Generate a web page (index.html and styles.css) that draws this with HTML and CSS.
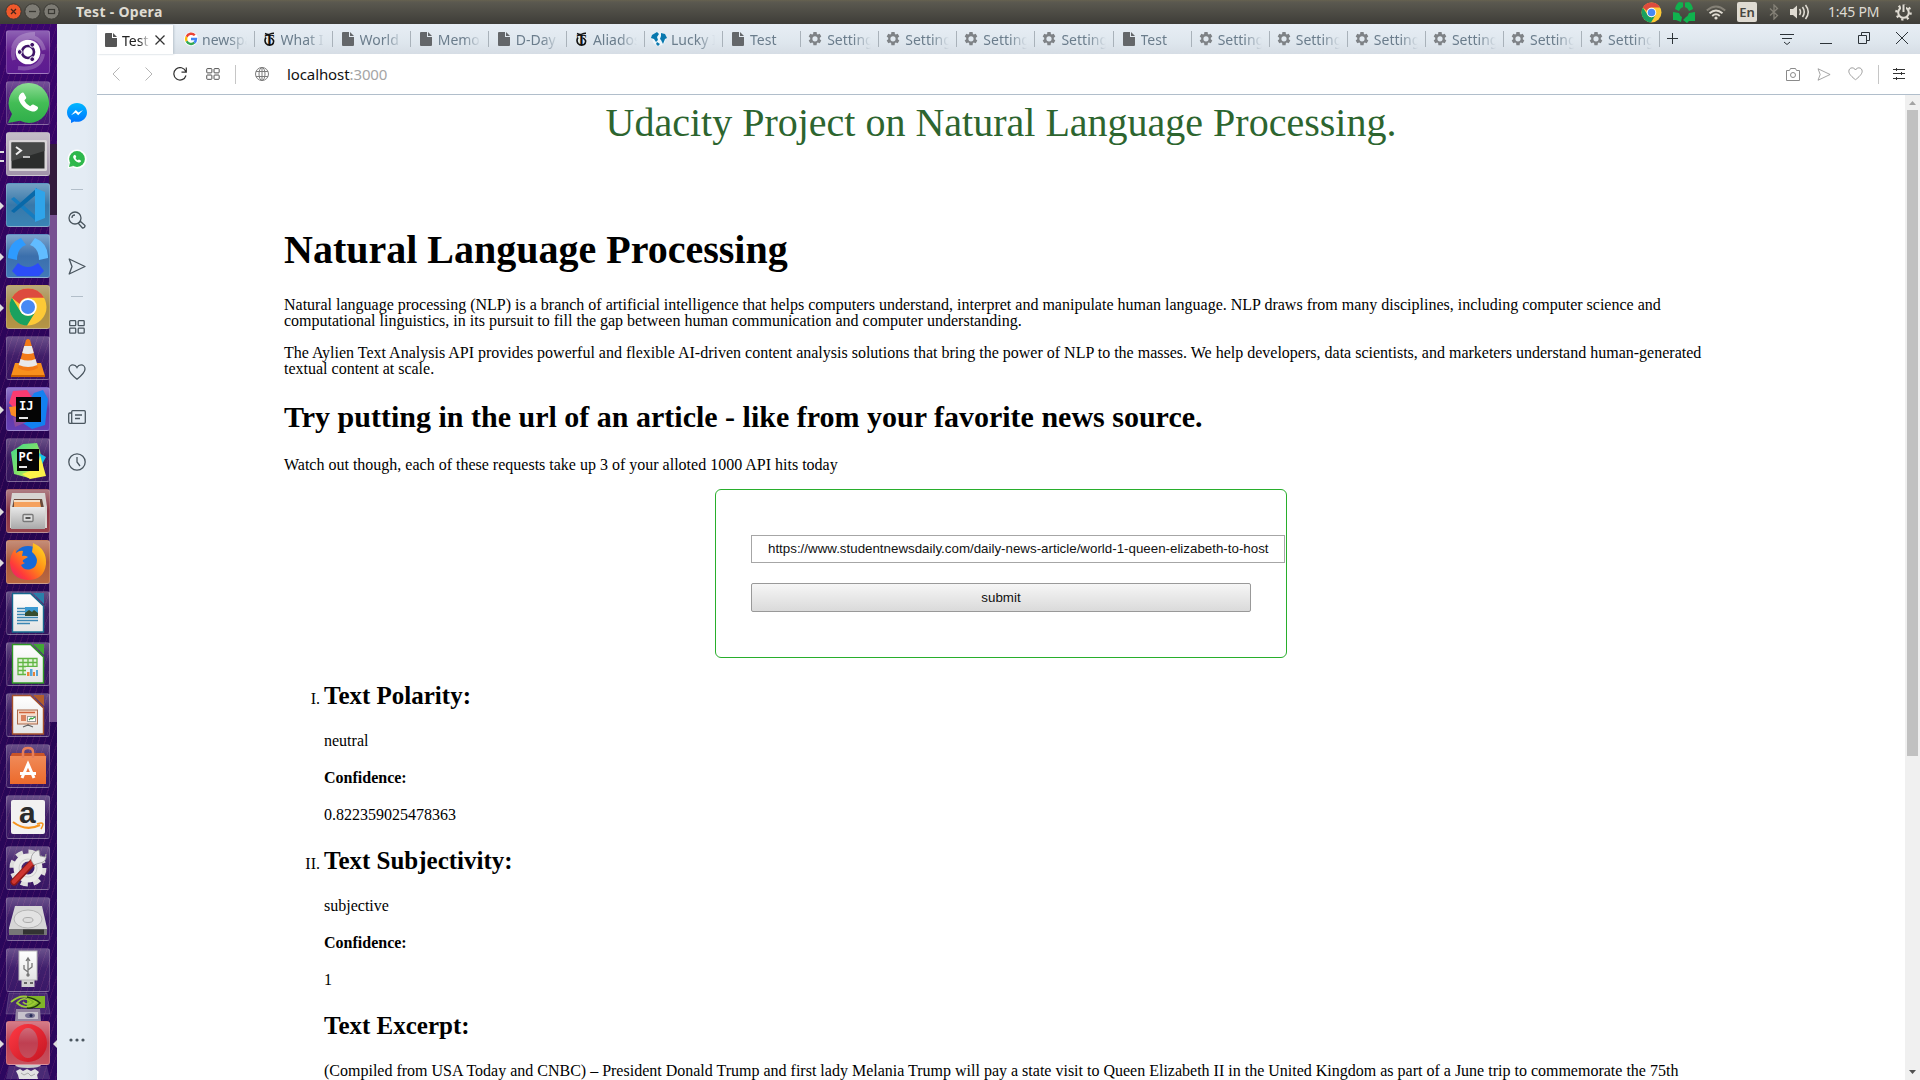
FILE: index.html
```html
<!DOCTYPE html>
<html lang="en">
<head>
<meta charset="utf-8">
<title>Test</title>
<link rel="stylesheet" href="styles.css">
</head>
<body>
<svg class="defs" width="0" height="0">
  <defs>
    <linearGradient id="gBubble" x1="0" y1="0" x2="0" y2="1"><stop offset="0" stop-color="#8fdc96"/><stop offset=".5" stop-color="#43bd55"/><stop offset="1" stop-color="#2fae4a"/></linearGradient>
    <linearGradient id="gMess" x1="0" y1="0" x2="0" y2="1"><stop offset="0" stop-color="#00b8ff"/><stop offset="1" stop-color="#0072ff"/></linearGradient>
    <linearGradient id="gPaper" x1="0" y1="0" x2="0" y2="1"><stop offset="0" stop-color="#fff"/><stop offset="1" stop-color="#e4e4e4"/></linearGradient>
    <linearGradient id="gMetal" x1="0" y1="0" x2="0" y2="1"><stop offset="0" stop-color="#e8e8e8"/><stop offset="1" stop-color="#a9a9a9"/></linearGradient>
    <linearGradient id="gBag" x1="0" y1="0" x2="0" y2="1"><stop offset="0" stop-color="#f08a58"/><stop offset="1" stop-color="#ec6a2c"/></linearGradient>
    <linearGradient id="gFox" x1="1" y1="0" x2="0" y2="1"><stop offset="0" stop-color="#ffe226"/><stop offset=".45" stop-color="#ff8a16"/><stop offset=".75" stop-color="#ff3a3a"/><stop offset="1" stop-color="#e31587"/></linearGradient>
    <linearGradient id="gPc" x1="0" y1="0" x2="1" y2="1"><stop offset="0" stop-color="#3fdc8a"/><stop offset=".5" stop-color="#7fe06a"/><stop offset="1" stop-color="#fcf84a"/></linearGradient>
    <linearGradient id="gOpera" x1="0" y1="0" x2="1" y2="1"><stop offset="0" stop-color="#ff3a44"/><stop offset="1" stop-color="#c41522"/></linearGradient>
    <symbol id="doc" viewBox="0 0 12 14"><path d="M1 0h6v5h5v8a1 1 0 0 1-1 1H1a1 1 0 0 1-1-1V1a1 1 0 0 1 1-1z"/><path d="M8 0l4 4H8z"/></symbol>
    <symbol id="gear" viewBox="0 0 14 14"><path fill-rule="evenodd" d="M5.4 0h3.2l.3 2 .9.5 1.9-.8 1.6 2.7-1.5 1.3v1.6l1.5 1.3-1.6 2.7-1.9-.8-.9.5-.3 2.2H5.4l-.3-2.2-.9-.5-1.9.8L.7 8.6l1.5-1.3V5.7L.7 4.4l1.6-2.7 1.9.8.9-.5zM7 4.2a2.6 2.6 0 1 0 0 5.2 2.6 2.6 0 0 0 0-5.2z"/></symbol>
    <symbol id="times" viewBox="0 0 11 14"><text x="0.8" y="12.5" font-family="Liberation Serif, serif" font-weight="bold" font-size="14" fill="#111">T</text><path d="M1 1.5q3 1.6 5 .6t4-.9M2 5.5q-2 3 0 6 2.5 2.6 6 1 2-1.500 1.500-4Q8 6 6.500 6" fill="none" stroke="#111" stroke-width="1.6"/></symbol>
    <symbol id="chrome" viewBox="-20 -20 40 40"><circle r="19" fill="#fdc936"/><path d="M-16.500-9.500A19 19 0 0 1 16.500-9.500H0A9 9 0 0 0-8.500-3z" fill="#dd4b3e"/><path d="M-16.500-9.500A19 19 0 0 0-1 19L7.500 5A9 9 0 0 1-8 4z" fill="#1aa15f"/><circle r="9" fill="#fff"/><circle r="7.200" fill="#4889f4"/></symbol>
    <symbol id="phone" viewBox="0 0 20 20"><path d="M4 1c1-.8 2-.6 2.600.5l1.600 3c.4 1 .2 1.500-.6 2.200l-.9.9c1 2.400 3 4.300 5.300 5.400l1-.9c.8-.9 1.400-1 2.300-.6l3 1.600c1 .6 1.100 1.500.4 2.500-1.300 2-3.500 2.600-5.600 2C7.600 16 3 11.500 1.600 6.600 1.100 4.400 2.200 2.300 4 1z" fill="#fff"/></symbol>
    <symbol id="heart" viewBox="0 0 18 16"><path d="M9 15.200C5 12 1 8.500 1 5c0-2.300 1.700-4.100 3.900-4.100C6.800.9 8.200 2 9 3.500 9.800 2 11.200.9 13.100.9 15.300.9 17 2.700 17 5c0 3.500-4 7-8 10.200z" fill="none" stroke="currentColor"/></symbol>
    <symbol id="send" viewBox="0 0 18 17"><path d="M1.200 1l15.800 7.500L1.200 16 4 8.500z" fill="none" stroke="currentColor" stroke-linejoin="round"/></symbol>
    <symbol id="tiles" viewBox="0 0 16 14"><g fill="none" stroke="currentColor"><rect x=".7" y=".7" width="6" height="5" rx=".8"/><rect x="9.200" y=".7" width="6" height="5" rx=".8"/><rect x=".7" y="8.200" width="6" height="5" rx=".8"/><rect x="9.200" y="8.200" width="6" height="5" rx=".8"/></g></symbol>
  </defs>
</svg>

<header class="panel">
  <div class="panel-left">
    <svg width="60" height="20" viewBox="0 0 60 20"><circle cx="13.500" cy="11.500" r="7.700" fill="#f0592b" stroke="#3a3934"/><path d="M11 9l5 5m0-5l-5 5" stroke="#46241a" stroke-width="1.300"/><circle cx="32.500" cy="11.500" r="7.700" fill="#7d7b74" stroke="#3a3934"/><path d="M29 11.500h7" stroke="#3a3934" stroke-width="1.300"/><circle cx="51.500" cy="11.500" r="7.700" fill="#7d7b74" stroke="#3a3934"/><rect x="48.500" y="9.500" width="6" height="4" fill="none" stroke="#3a3934" stroke-width="1.200"/></svg>
    <span class="panel-title">Test - Opera</span>
  </div>
  <div class="panel-right">
    <svg width="21" height="21"><use href="#chrome"/></svg>
    <svg width="22" height="22" viewBox="-11 -11 22 22"><g fill="#10b24e"><path d="M-5-10L-1-9.500V-5Q-4-4-5-1L-9-3Q-8-8-5-10z"/><path d="M5-10L1-9.500V-5Q4-4 5-1L9-3Q8-8 5-10z"/><path d="M-11 0l6 1q1 3 3 4l-1 5-5-2H-11z"/><path d="M11 0L5 1Q4 4 2 5l-3 3 4 3 2-2H11z"/></g></svg>
    <svg width="20" height="15" viewBox="0 0 20 15"><g fill="none" stroke-width="1.900"><path d="M.8 5.500Q10-2.500 19.200 5.500" stroke="#858177"/><path d="M3.500 8.300Q10 2.500 16.500 8.300M6.200 11Q10 7.500 13.800 11" stroke="#dfdbd2"/></g><circle cx="10" cy="13" r="1.600" fill="#dfdbd2"/></svg>
    <span class="lang">En</span>
    <svg width="10" height="16" viewBox="0 0 10 16"><path d="M1 4.500l7.500 7L5 15V1l3.500 3.500-7.500 7" fill="none" stroke="#858177" stroke-width="1.300"/></svg>
    <svg width="20" height="16" viewBox="0 0 20 16"><path d="M0 5h3l4-3.500v13L3 11H0z" fill="#dfdbd2"/><path d="M9.500 5q2 3 0 6M12.500 3q3.500 5 0 10M15.500 1q5.500 7 0 14" fill="none" stroke="#dfdbd2" stroke-width="1.600"/></svg>
    <span class="clock">1:45 PM</span>
    <svg width="17" height="17" viewBox="-8.500 -8.500 17 17"><circle r="5.300" fill="none" stroke="#dfdbd2" stroke-width="2"/><circle r="7" fill="none" stroke="#dfdbd2" stroke-width="2.600" stroke-dasharray="2.200 3.298"/><path d="M0-8v7" stroke="#4a4943" stroke-width="5"/><path d="M0-8v7.500" stroke="#dfdbd2" stroke-width="2"/></svg>
  </div>
</header>

<div class="desktop">
  <nav class="launcher">
    <div class="tile t-ubuntu"><svg viewBox="0 0 44 44"><g fill="none" stroke="#fff" stroke-width="4" opacity=".22"><path d="M8 30Q3 12 22 7q12-1 16 13"/><path d="M12 38Q34 41 37 24"/><path d="M7 18q4-14 22-14"/></g><circle cx="22" cy="22" r="12.300" fill="#fff"/><circle cx="22" cy="22" r="6" fill="none" stroke="#3f1468" stroke-width="2.600"/><g fill="#3f1468" stroke="#fff"><circle cx="13.700" cy="22" r="2.400"/><circle cx="26.200" cy="14.800" r="2.400"/><circle cx="26.200" cy="29.200" r="2.400"/></g></svg></div>
    <div class="tile"><svg viewBox="0 0 44 44"><path d="M22 2a20 20 0 1 1-8 37.800L2 42l4-9A20 20 0 0 1 22 2z" fill="url(#gBubble)"/><use href="#phone" x="11" y="11" width="22" height="22"/></svg></div>
    <div class="tile t-term run2"><svg viewBox="0 0 44 44"><rect x="3" y="8" width="38" height="31" rx="1.500" fill="#d9d6d8"/><rect x="5.500" y="10.500" width="33" height="26" fill="#2b2d2c"/><path d="M5.500 10.500h33V19L5.500 29z" fill="#464847"/><path d="M10 15l5 3.500-5 4" fill="none" stroke="#eee" stroke-width="2"/><path d="M17 25h7" stroke="#eee" stroke-width="1.500"/></svg></div>
    <div class="tile t-code run"><svg viewBox="0 0 44 44"><path d="M5 16l3-2 23 20v5z" fill="#167cbf"/><path d="M5 28l3 2L31 11V5z" fill="#0969a9"/><path d="M29 5l10 4v26l-10 4z" fill="#2fa4ea"/></svg></div>
    <div class="tile t-blue run"><svg viewBox="0 0 44 44"><path d="M15 4l5 7q-9 3-9 15l-9-2Q2 9 15 4z" fill="#2e9bff"/><path d="M29 4l-5 7q9 3 9 15l9-2Q42 9 29 4z" fill="#61bcff"/><path d="M12 29q10 8 20 0l6 8-5 5H11l-5-5z" fill="#2b4df8"/></svg></div>
    <div class="tile t-chrome run"><svg viewBox="0 0 44 44"><use href="#chrome" x="2.500" y="2.500" width="39" height="39"/></svg></div>
    <div class="tile"><svg viewBox="0 0 44 44"><path d="M9 27h26l4 13H5z" fill="#f8901c"/><path d="M5 39h34v2H5z" fill="#c86005"/><path d="M20 4q2-2 4 0l8 28q-10 6-20 0z" fill="#f27a17"/><path d="M18.200 10h7.600l2 7q-5.800 2-11.600 0zM14.500 23q7.500 3 15 0l1.800 6q-9 4-18.600 0z" fill="#e9e9e9"/></svg></div>
    <div class="tile t-ij run"><svg viewBox="0 0 44 44"><path d="M7 4l14-1 6 9-18 10-6-6z" fill="#f93b70"/><path d="M3 20l9-1v12l-7-3z" fill="#fb8b23"/><path d="M28 6l9-3 5 9-3 26-13 4-14-9z" fill="#1280f0"/><path d="M7 30l16 4-14 6z" fill="#8b4b9d"/><rect x="10" y="10" width="25" height="25" fill="#050505"/><text x="13" y="23" class="badge">IJ</text><path d="M13 31h9" stroke="#fff" stroke-width="1.800"/></svg></div>
    <div class="tile"><svg viewBox="0 0 44 44"><path d="M5 14L17 6l14-1 3 8 3 15-14 12-15-4z" fill="url(#gPc)"/><path d="M31 14l9 5-5 9z" fill="#13c2e8"/><path d="M34 17l6 21-16 3-8-5 16-6z" fill="#fbf24a"/><rect x="11" y="11" width="22" height="22" fill="#050505"/><text x="12.500" y="22.500" class="badge">PC</text><path d="M13 29h8" stroke="#fff" stroke-width="1.800"/></svg></div>
    <div class="tile t-files run"><svg viewBox="0 0 44 44"><path d="M6 4h33l2 14v21H4V18z" fill="#d7d5d2"/><path d="M8 10h28l2 9H6z" fill="#6a4a3b"/><path d="M8 13h26l1 5H8z" fill="#f5a15d"/><path d="M8 11h26v2H8z" fill="#f4dfc8"/><path d="M5 18h34v22H5z" fill="url(#gMetal)"/><rect x="17" y="25.500" width="10" height="7" rx="1" fill="#ddd" stroke="#777" stroke-width="1.300"/><path d="M19.500 29h5" stroke="#555" stroke-width="2"/></svg></div>
    <div class="tile t-fox run"><svg viewBox="0 0 44 44"><circle cx="22" cy="21" r="15" fill="#1669d8"/><path d="M27 3q14 6 13 21-2 16-18 16Q5 39 4 23q0-8 5-14l1 4q4-3 7-2l-1 5q3-1 6 1l-5 3q-1 2 2 3l-4 2q3 6 10 4 6-2 6-9-1-5-5-8 1-5 1-9z" fill="url(#gFox)"/></svg></div>
    <div class="tile"><svg viewBox="0 0 44 44"><path d="M6.500 2.500h18L37.500 15v26h-31z" fill="url(#gPaper)" stroke="#16698f" stroke-width="1.400"/><path d="M27 2h11v11z" fill="#2a7fa9"/><path d="M11 17.500h8m-8 3h8m-8 3h8m-8 3h21m-21 3h21m-21 3h13" stroke="#3b86b4" stroke-width="1.500"/><rect x="19" y="16" width="13" height="9" fill="#3b9ad2"/><path d="M19 25v-3l4-3 3 2 2-2 4 3v3z" fill="#354c2e"/></svg></div>
    <div class="tile"><svg viewBox="0 0 44 44"><path d="M6.500 2.500h18L37.500 15v26h-31z" fill="url(#gPaper)" stroke="#2f9a25" stroke-width="1.400"/><path d="M27 2h11v11z" fill="#42a636"/><path d="M12 16.500h19v16H12zm0 4h19m-19 4h19m-19 4h19M17 16.500v16m5-16v16m5-16v16" fill="#e3f3da" stroke="#5fb542" stroke-width="1.300"/><rect x="20" y="25" width="12" height="9" fill="#eee"/><path d="M21 34v-4h2.500v4zm6 0v-4h2v4z" fill="#e88538"/><path d="M24 34v-7h2.500v7zm6 0v-6h2v6z" fill="#58a6d6"/></svg></div>
    <div class="tile"><svg viewBox="0 0 44 44"><path d="M6.500 2.500h18L37.500 15v26h-31z" fill="url(#gPaper)" stroke="#a7512b" stroke-width="1.400"/><path d="M27 2h11v11z" fill="#b25e2d"/><rect x="11.500" y="17" width="20" height="14" fill="#f7dccb" stroke="#a8694b"/><path d="M13 19.500h16M15 23h5m-5 2h5m-5 2h5" stroke="#d0643b" stroke-width="1.600"/><rect x="21.500" y="23.500" width="8" height="5" fill="#fff" stroke="#999"/><path d="M23 27l2-2 1 1 3-2" fill="none" stroke="#3aa23e" stroke-width="1.200"/><path d="M22 31v2m-5 1l5-2 5 2" fill="none" stroke="#666" stroke-width="1.300"/></svg></div>
    <div class="tile"><svg viewBox="0 0 44 44"><path d="M6 9h32l2 4H4z" fill="#c95428"/><path d="M4 12h36v28H4z" fill="url(#gBag)"/><path d="M17 14V8q0-4 5-4t5 4v6" fill="none" stroke="#e77f5b" stroke-width="2.500"/><path d="M16 34l6-14 6 14M14 29.500h16" fill="none" stroke="#fff" stroke-width="3"/></svg></div>
    <div class="tile"><svg viewBox="0 0 44 44"><rect x="5" y="5" width="34" height="34" rx="2" fill="#f2f1f1"/><text x="13" y="28" class="amazon">a</text><path d="M7 27q13 10 27 3" fill="none" stroke="#f6931e" stroke-width="2"/><path d="M31 29q5-2 6 0 0 2-2 5" fill="none" stroke="#f6931e" stroke-width="1.500"/></svg></div>
    <div class="tile"><svg viewBox="0 0 44 44"><circle cx="22" cy="22" r="16" fill="none" stroke="#dededc" stroke-width="5" stroke-dasharray="7 5.566"/><circle cx="22" cy="22" r="10.500" fill="none" stroke="#ebebe9" stroke-width="8"/><circle cx="22" cy="22" r="9" fill="none" stroke="#cfcfcf" stroke-width="1"/><path d="M8 36L27 16" stroke="#8f1a18" stroke-width="7" stroke-linecap="round"/><path d="M8 35.500L27 15.500" stroke="#cf3630" stroke-width="4.500" stroke-linecap="round"/><path d="M25 14q0-8 8-10l1 6 5 1 1-3q1 8-6 9-4 1-6 2z" fill="#e9e9e9" stroke="#999" stroke-width=".8"/></svg></div>
    <div class="tile"><svg viewBox="0 0 44 44"><path d="M9 9h27l5 22v6H3v-6z" fill="#d6d6d6"/><path d="M3 32h38v6H3z" fill="#777"/><path d="M17 32.500h21v5H17z" fill="#333"/><ellipse cx="22" cy="22" rx="14" ry="9" fill="#e2e2e2" stroke="#b5b5b5"/><ellipse cx="22" cy="23" rx="5" ry="2.500" fill="#ddd" stroke="#aaa"/></svg></div>
    <div class="tile"><svg viewBox="0 0 44 44"><rect x="15.500" y="31" width="13" height="8" fill="#d2d2d2"/><path d="M18 35h3m3 0h3" stroke="#666" stroke-width="2"/><rect x="13" y="3" width="18" height="29" fill="url(#gPaper)" stroke="#bbb"/><path d="M22 11v17m0-4l-4-3v-4m4 5l4-3v-4m-6-2l2-3 2 3" fill="none" stroke="#777" stroke-width="1.300"/><circle cx="22" cy="27" r="1.700" fill="#777"/></svg></div>
    <svg class="folded" width="46" height="30" viewBox="0 0 46 30"><path d="M4 1h38l3 21H1z" fill="#fff" fill-opacity=".14" stroke="#fff" stroke-opacity=".16"/><path d="M22 4h18v12H22z" fill="#80b529"/><path d="M6 10q13-11 25 0-10 9-19 1 7-8 14-1-5 4-8 0" fill="none" stroke="#9ccc35" stroke-width="1.700"/><path d="M22 5q9 2 13 6-6 6-13 5" fill="none" stroke="#1e3a0c" stroke-width="1.500"/><path d="M11 17h24l1 12H10z" fill="#92849f"/><path d="M13 20h20v7H13z" fill="#c7c2cc"/><ellipse cx="25" cy="23.500" rx="5" ry="2.500" fill="#746e91"/><circle cx="26" cy="23.500" r="1.500" fill="#222a55"/></svg>
    <div class="tile t-opera run focus"><svg viewBox="0 0 44 44"><path fill-rule="evenodd" d="M22 3a19 19 0 1 0 0 38 19 19 0 0 0 0-38zm0 4c6 0 10 7 10 15s-4 15-10 15-9.500-7-9.500-15S16 7 22 7z" fill="url(#gOpera)"/></svg></div>
    <svg class="trash" width="46" height="14" viewBox="0 0 46 14"><path d="M4 1h38l3 13H1z" fill="#fff" fill-opacity=".14"/><path d="M10 0h26q-1 3-13 3T10 0z" fill="#c9c9c9"/><path d="M11 6l4-2 3 2 4-2 4 2 4-2 4 3-2 3 1 4H14l-1-4z" fill="#e2e2e2"/><path d="M16 8l3 2 4-2 3 3 4-2" fill="none" stroke="#aaa"/></svg>
  </nav>

  <aside class="sidebar">
    <div class="slot"><svg width="20" height="20" viewBox="0 0 20 20"><path d="M10 0c5.600 0 10 4.100 10 9.400s-4.400 9.400-10 9.400q-1.500 0-2.800-.4L4 20v-3C1.500 15.200 0 12.500 0 9.400 0 4.100 4.400 0 10 0z" fill="url(#gMess)"/><path d="M4 12.200L8.800 7l2.600 2.500L16 7l-4.800 5.200L8.700 9.700z" fill="#fff"/></svg></div>
    <div class="slot"><svg width="20" height="20" viewBox="0 0 20 20"><path d="M10 .5a9.500 9.500 0 1 1-4.500 17.800L.6 19.500l1.300-4.800A9.500 9.500 0 0 1 10 .5z" fill="#fff"/><circle cx="10" cy="10" r="7.900" fill="#2fb84c"/><path d="M2 18l1-4.500L6.500 17z" fill="#2fb84c"/><use href="#phone" x="5.500" y="5.500" width="9" height="9"/></svg></div>
    <hr>
    <div class="slot"><svg width="18" height="18" viewBox="0 0 18 18" fill="none" stroke="#4a565f" stroke-width="1.300"><circle cx="7" cy="7" r="6"/><path d="M4 7q0-3 3-3M10.500 12.500l2-2 4.500 4q0 2.500-2.500 2.500z"/></svg></div>
    <div class="slot"><svg width="18" height="17" stroke-width="1.300"><use href="#send"/></svg></div>
    <hr>
    <div class="slot"><svg width="16" height="14" stroke-width="1.300"><use href="#tiles"/></svg></div>
    <div class="slot"><svg width="18" height="16" stroke-width="1.300"><use href="#heart"/></svg></div>
    <div class="slot"><svg width="18" height="14" viewBox="0 0 18 14" fill="none" stroke="#4a565f" stroke-width="1.300"><rect x="3.700" y=".7" width="13.600" height="12.600" rx="1"/><path d="M3.500 3H1.700q-1 0-1 1v8q0 1.300 1.300 1.300h2.500M7 5h7M7 8.500h5"/></svg></div>
    <div class="slot"><svg width="18" height="18" viewBox="0 0 18 18" fill="none" stroke="#4a565f" stroke-width="1.300"><circle cx="9" cy="9" r="8.200"/><path d="M9 4v5l3 4"/></svg></div>
    <svg class="more" width="16" height="4" viewBox="0 0 16 4" fill="#4a565f"><circle cx="2" cy="2" r="1.600"/><circle cx="8" cy="2" r="1.600"/><circle cx="14" cy="2" r="1.600"/></svg>
  </aside>

  <section class="browser">
    <div class="tabs">
      <div class="tab active"><svg class="doc" width="12" height="14"><use href="#doc"/></svg><span>Test</span><svg width="10" height="10" viewBox="0 0 10 10"><path d="M.5.500l9 9m0-9l-9 9" stroke="#333" stroke-width="1.300"/></svg></div>
      <div class="tab google"><svg width="14" height="14" viewBox="0 0 14 14"><circle cx="7" cy="7" r="7" fill="#fff"/><g fill="none" stroke-width="2.400"><path d="M10.800 3.300A5 5 0 0 0 2.600 4.700" stroke="#ea4335"/><path d="M2.600 4.700a5 5 0 0 0 0 4.600" stroke="#fbbc05"/><path d="M2.600 9.300a5 5 0 0 0 7.700 1.400" stroke="#34a853"/><path d="M10.300 10.700Q12 9.300 12 7H7" stroke="#4285f4"/></g></svg><span>newspaper</span></div>
      <div class="tab"><svg width="11" height="14"><use href="#times"/></svg><span>What I l</span></div>
      <div class="tab"><svg class="doc" width="12" height="14"><use href="#doc"/></svg><span>World</span></div>
      <div class="tab"><svg class="doc" width="12" height="14"><use href="#doc"/></svg><span>Memorial</span></div>
      <div class="tab"><svg class="doc" width="12" height="14"><use href="#doc"/></svg><span>D-Day</span></div>
      <div class="tab"><svg width="11" height="14"><use href="#times"/></svg><span>Aliados</span></div>
      <div class="tab globe"><svg width="16" height="14" viewBox="0 0 16 14"><circle cx="8" cy="7" r="6.700" fill="#eef6fb"/><path d="M1 3l5-3 2 2-2 3 1 3-2 2-2-3-3-1zM10 1l4 1 2 4-2 1-2 5-2-4-1-1 1-3zM6 10l3 2-2 2-2-2z" fill="#0878ae"/></svg><span>Lucky I</span></div>
      <div class="tab"><svg class="doc" width="12" height="14"><use href="#doc"/></svg><span>Test</span></div>
      <div class="tab set"><svg width="14" height="14"><use href="#gear"/></svg><span>Settings</span></div>
      <div class="tab set"><svg width="14" height="14"><use href="#gear"/></svg><span>Settings</span></div>
      <div class="tab set"><svg width="14" height="14"><use href="#gear"/></svg><span>Settings</span></div>
      <div class="tab set"><svg width="14" height="14"><use href="#gear"/></svg><span>Settings</span></div>
      <div class="tab"><svg class="doc" width="12" height="14"><use href="#doc"/></svg><span>Test</span></div>
      <div class="tab set"><svg width="14" height="14"><use href="#gear"/></svg><span>Settings</span></div>
      <div class="tab set"><svg width="14" height="14"><use href="#gear"/></svg><span>Settings</span></div>
      <div class="tab set"><svg width="14" height="14"><use href="#gear"/></svg><span>Settings</span></div>
      <div class="tab set"><svg width="14" height="14"><use href="#gear"/></svg><span>Settings</span></div>
      <div class="tab set"><svg width="14" height="14"><use href="#gear"/></svg><span>Settings</span></div>
      <div class="tab set"><svg width="14" height="14"><use href="#gear"/></svg><span>Settings</span></div>
      <svg class="plus" width="11" height="11" viewBox="0 0 11 11"><path d="M5.500 0v11M0 5.500h11" stroke="#2c3338"/></svg>
      <div class="win">
        <svg width="14" height="14" viewBox="0 0 14 14" fill="none" stroke="#2c3338"><path d="M0 2.500h14M2 6.500h10M4 10l3 2.500 3-2.500"/></svg>
        <svg width="12" height="12" viewBox="0 0 12 12"><path d="M0 11.500h12" stroke="#2c3338"/></svg>
        <svg width="12" height="12" viewBox="0 0 12 12" fill="none" stroke="#2c3338"><path d="M.5 3.500h8v8h-8zM3.500 3V.5h8v8H9"/></svg>
        <svg width="12" height="12" viewBox="0 0 12 12"><path d="M0 0l12 12M12 0L0 12" stroke="#2c3338"/></svg>
      </div>
    </div>

    <div class="toolbar">
      <svg class="back" width="8" height="14" viewBox="0 0 8 14"><path d="M7.500.500L1 7l6.500 6.500" fill="none" stroke="#b5b5b5"/></svg>
      <svg class="fwd" width="8" height="14" viewBox="0 0 8 14"><path d="M.5.500L7 7 .5 13.500" fill="none" stroke="#b5b5b5"/></svg>
      <svg class="reload" width="14" height="14" viewBox="0 0 14 14"><path d="M12.800 4.500A6.200 6.200 0 1 0 13 8.500M13.300.5v4.700H8.500" fill="none" stroke="#333" stroke-width="1.200"/></svg>
      <svg class="dial" width="14" height="12"><use href="#tiles"/></svg>
      <i class="rule"></i>
      <svg class="world" width="14" height="14" viewBox="0 0 14 14" fill="none" stroke="#7c7c7c"><circle cx="7" cy="7" r="6.500"/><ellipse cx="7" cy="7" rx="3" ry="6.500"/><path d="M1 4.500h12M1 9.500h12M7 .5v13"/></svg>
      <span class="url">localhost<b>:3000</b></span>
      <div class="actions">
        <svg width="14" height="13" viewBox="0 0 14 13" fill="none" stroke="#8a8a8a"><path d="M.5 2.500h3l1-2h5l1 2h3v10H.5z"/><circle cx="7" cy="7" r="2.500"/></svg>
        <svg width="14" height="13"><use href="#send"/></svg>
        <svg width="15" height="13.500"><use href="#heart"/></svg>
        <i class="rule"></i>
        <svg width="12" height="12" viewBox="0 0 12 12" fill="none" stroke="#333"><path d="M0 1.500h12M0 5.500h12M0 10.500h12M3.500 0v3M8.500 4v3M3.500 9v3"/></svg>
      </div>
    </div>

    <div class="viewport">
      <main class="page">
        <div class="banner">Udacity Project on Natural Language Processing.</div>
        <div class="content">
          <h1>Natural Language Processing</h1>
          <p>Natural language processing (NLP) is a branch of artificial intelligence that helps computers understand, interpret and manipulate human language. NLP draws from many disciplines, including computer science and computational linguistics, in its pursuit to fill the gap between human communication and computer understanding.</p>
          <p>The Aylien Text Analysis API provides powerful and flexible AI-driven content analysis solutions that bring the power of NLP to the masses. We help developers, data scientists, and marketers understand human-generated textual content at scale.</p>
          <h2>Try putting in the url of an article - like from your favorite news source.</h2>
          <p>Watch out though, each of these requests take up 3 of your alloted 1000 API hits today</p>
          <form class="form">
            <div class="field">https://www.studentnewsdaily.com/daily-news-article/world-1-queen-elizabeth-to-host</div>
            <button type="button" class="submit">submit</button>
          </form>
          <ol class="results">
            <li><h3>Text Polarity:</h3><p>neutral</p><h4>Confidence:</h4><p>0.822359025478363</p></li>
            <li><h3>Text Subjectivity:</h3><p>subjective</p><h4>Confidence:</h4><p>1</p></li>
          </ol>
          <div class="excerpt"><h3>Text Excerpt:</h3><p>(Compiled from USA Today and CNBC) – President Donald Trump and first lady Melania Trump will pay a state visit to Queen Elizabeth II in the United Kingdom as part of a June trip to commemorate the 75th</p></div>
        </div>
      </main>
      <div class="scrollbar">
        <svg width="7" height="4" viewBox="0 0 7 4"><path d="M0 4l3.500-4L7 4z" fill="#a3a3a3"/></svg>
        <div class="thumb"></div>
        <svg class="down" width="7" height="4" viewBox="0 0 7 4"><path d="M0 0h7L3.500 4z" fill="#505050"/></svg>
      </div>
    </div>
  </section>
</div>
</body>
</html>
```
FILE: styles.css
```css
* { box-sizing: border-box; }
html, body { margin: 0; height: 100%; overflow: hidden; }
body { display: flex; flex-direction: column; width: 1920px; height: 1080px; background: #fff; font-family: "Noto Sans", sans-serif; }
svg { display: block; flex: none; }
.defs { position: absolute; }

/* desktop panel */
.panel { height: 24px; flex: none; display: flex; justify-content: space-between; background: linear-gradient(#66624f 0, #5b5950 2px, #3f3e39 23px); }
.panel-left { display: flex; gap: 16px; }
.panel-title { font-weight: 700; font-size: 14px; line-height: 24px; letter-spacing: .3px; color: #dfdbd2; white-space: nowrap; }
.panel-right { display: flex; align-items: center; padding-right: 8px; gap: 11px; }
.lang { width: 20px; height: 20px; margin-right: 1px; border-radius: 2px; background: #dfdbd2; color: #474640; font-weight: 600; font-size: 13px; line-height: 21px; text-align: center; }
.clock { width: 63px; padding-left: 7px; font-size: 14px; line-height: 24px; letter-spacing: -.2px; color: #dfdbd2; white-space: nowrap; }

.desktop { flex: 1; min-height: 0; display: flex; }

/* launcher */
.launcher { width: 57px; flex: none; overflow: hidden; display: flex; flex-direction: column; gap: 7px; padding: 6px 0 0 6px;
  background:
    linear-gradient(#321a3c, #321a3c) 49px 120px / 8px 71px no-repeat,
    linear-gradient(#775191, #775191) 49px 191px / 8px 507px no-repeat,
    repeating-linear-gradient(108deg, rgba(130,50,120,.22) 0 1px, transparent 1px 6px),
    linear-gradient(#3a056e, #25054f 45%, #2c075f); }
.tile { position: relative; width: 44px; height: 44px; flex: none; border-radius: 3px; border: 1px solid rgba(255,255,255,.17); background: linear-gradient(rgba(255,255,255,.3), rgba(255,255,255,.1) 45%, rgba(255,255,255,.07)); }
.tile > svg { width: 44px; height: 44px; margin: -1px; }
.t-ubuntu { background: linear-gradient(#8e62b4, #642090 50%, #5c1b91); }
.t-term { background: linear-gradient(#c5bec8, #a294aa); }
.t-code { background: linear-gradient(#74a0c3, #3778a9 50%, #3a83b5); }
.t-blue { background: linear-gradient(#7da4cb, #3b6fac 50%, #4279b8); }
.t-chrome { background: linear-gradient(#b9a87c, #a88d45 50%, #b69545); }
.t-ij { background: linear-gradient(#8f78c8, #5e38a5 50%, #653fb5); }
.t-files { background: linear-gradient(#ae7d83, #873445 50%, #98424b); }
.t-fox { background: linear-gradient(#c58d77, #aa593c 50%, #ba6841); }
.t-opera { background: linear-gradient(#d57c88, #bf3f51 50%, #c7525e); }
.run::before { content: ""; position: absolute; left: -7px; top: 18px; border: 4px solid transparent; border-right: 0; border-left-color: #ddd; }
.run2::before { content: ""; position: absolute; left: -7px; top: 18px; width: 4px; height: 7px; border: solid #ddd; border-width: 2px 0; }
.focus::after { content: ""; position: absolute; left: 46px; top: 18px; border: 4px solid transparent; border-left: 0; border-right-color: #ddd; }
.badge { font: 700 12px "DejaVu Sans Mono", monospace; fill: #fff; }
.amazon { font: 700 30px "Liberation Sans", sans-serif; fill: #2b2b2b; }
.folded { margin: -7px 0 -8px -1px; }
.trash { margin: -7px 0 0 -1px; }

/* browser side panel */
.sidebar { width: 40px; flex: none; display: flex; flex-direction: column; align-items: center; padding-top: 66px; color: #4a565f; background: linear-gradient(90deg, #e4ecf4 70%, #dfe8f0); }
.slot { height: 46px; width: 40px; display: flex; align-items: center; justify-content: center; flex: none; }
.slot:nth-of-type(n+5) { height: 45px; }
.sidebar hr { width: 12px; height: 1px; border: 0; margin: 7px 0; background: #b2bec9; flex: none; }
.more { margin-top: auto; margin-bottom: 38px; }

/* tabs */
.browser { flex: 1; min-width: 0; display: flex; flex-direction: column; }
.tabs { height: 30px; flex: none; display: flex; align-items: stretch; background: linear-gradient(#e7eef5, #dfe7ee 60%, #d6dde5); }
.tab { position: relative; width: 78.1px; flex: none; display: flex; align-items: center; gap: 6px; padding: 0 8px 0 9px; color: #6b7d8c; font-size: 14px; }
.tab::after { content: ""; position: absolute; right: 0; top: 7px; width: 1px; height: 16px; background: #a9b2ba; }
.tab span { flex: 1; min-width: 0; height: 24px; line-height: 24px; margin-top: 2px; overflow: hidden; white-space: nowrap; -webkit-mask-image: linear-gradient(90deg, #000 60%, transparent); mask-image: linear-gradient(90deg, #000 60%, transparent); }
.tab.set { padding-left: 7px; gap: 5px; }
.tab.set > svg { fill: #7e8286; }
.tab.globe { padding-left: 6px; gap: 4px; }
.tab .doc { fill: #64676a; }
.tab.active { width: 76px; margin-top: 1px; padding: 0 8px; gap: 5px; background: #fff; color: #222; box-shadow: 1px 0 2px #b9c3cc; }
.tab.active::after { display: none; }
.tab.active .doc { fill: #555; }
.tab.google { width: 81.500px; padding-left: 11px; gap: 4px; }
.plus { margin: 9px 0 0 7px; }
.win { margin-left: auto; display: flex; gap: 26px; padding: 8px 12px 0 0; }

/* toolbar */
.toolbar { height: 41px; flex: none; display: flex; align-items: center; padding: 0 15px; border-bottom: 1px solid #b1becb; background: #fff; }
.back { margin-right: 25px; }
.fwd { margin-right: 20px; }
.reload { margin-right: 19px; }
.dial { color: #333; margin-right: 15px; }
.rule { width: 1px; height: 19px; background: #c6c6c6; }
.world { margin: 0 18px 0 19px; }
.url { font-size: 15px; letter-spacing: -.1px; line-height: 24px; color: #111; }
.url b { font-weight: 400; color: #a5a5a5; }
.actions { margin-left: auto; display: flex; align-items: center; gap: 17px; padding-left: 0; color: #8a8a8a; }
.toolbar .actions .rule { margin: 0 -3px 0 -2px; }

/* page */
.viewport { flex: 1; min-height: 0; display: flex; }
.page { flex: 1; min-width: 0; overflow: hidden; font: 16px/16px "Liberation Serif", serif; color: #000; }
.banner { font-size: 40px; line-height: 56px; height: 56px; text-align: center; color: #2d652f; }
.content { width: 1434px; margin: 0 auto; padding-top: 59px; }
.content p { margin: 16px 0; }
h1 { margin: 20px 0 27px; font-size: 40px; line-height: 40px; }
.content h1 + p { margin-top: 27px; }
h2 { margin: 25px 0; font-size: 30px; line-height: 30px; }
h3 { margin: 25px 0; font-size: 25px; line-height: 25px; }
h4 { margin: 21px 0; font-size: 16px; line-height: 16px; }
.form { width: 572px; height: 169px; margin: 16px auto 0; padding: 45px 35px; border: 1px solid #28ae2c; border-radius: 6px; display: flex; flex-direction: column; gap: 20px; font: 13.333px/16px "Liberation Sans", sans-serif; color: #111; }
.field { width: 534px; height: 28px; padding: 5px 16px; border: 1px solid #a6a6a6; white-space: nowrap; }
.submit { width: 500px; height: 29px; padding: 0; border: 1px solid #999; border-radius: 2px; background: linear-gradient(#f6f6f6, #dadada); font: inherit; color: #111; }
.results { list-style: upper-roman; margin: 25px 0; padding-left: 40px; }
.excerpt { padding-left: 40px; }
.excerpt p { width: 1394px; }

.scrollbar { width: 15px; flex: none; display: flex; flex-direction: column; align-items: center; padding: 6px 0; background: #f0f0f0; }
.thumb { width: 11px; height: 646px; margin-top: 5px; background: #c1c1c1; }
.down { margin-top: auto; }
```
